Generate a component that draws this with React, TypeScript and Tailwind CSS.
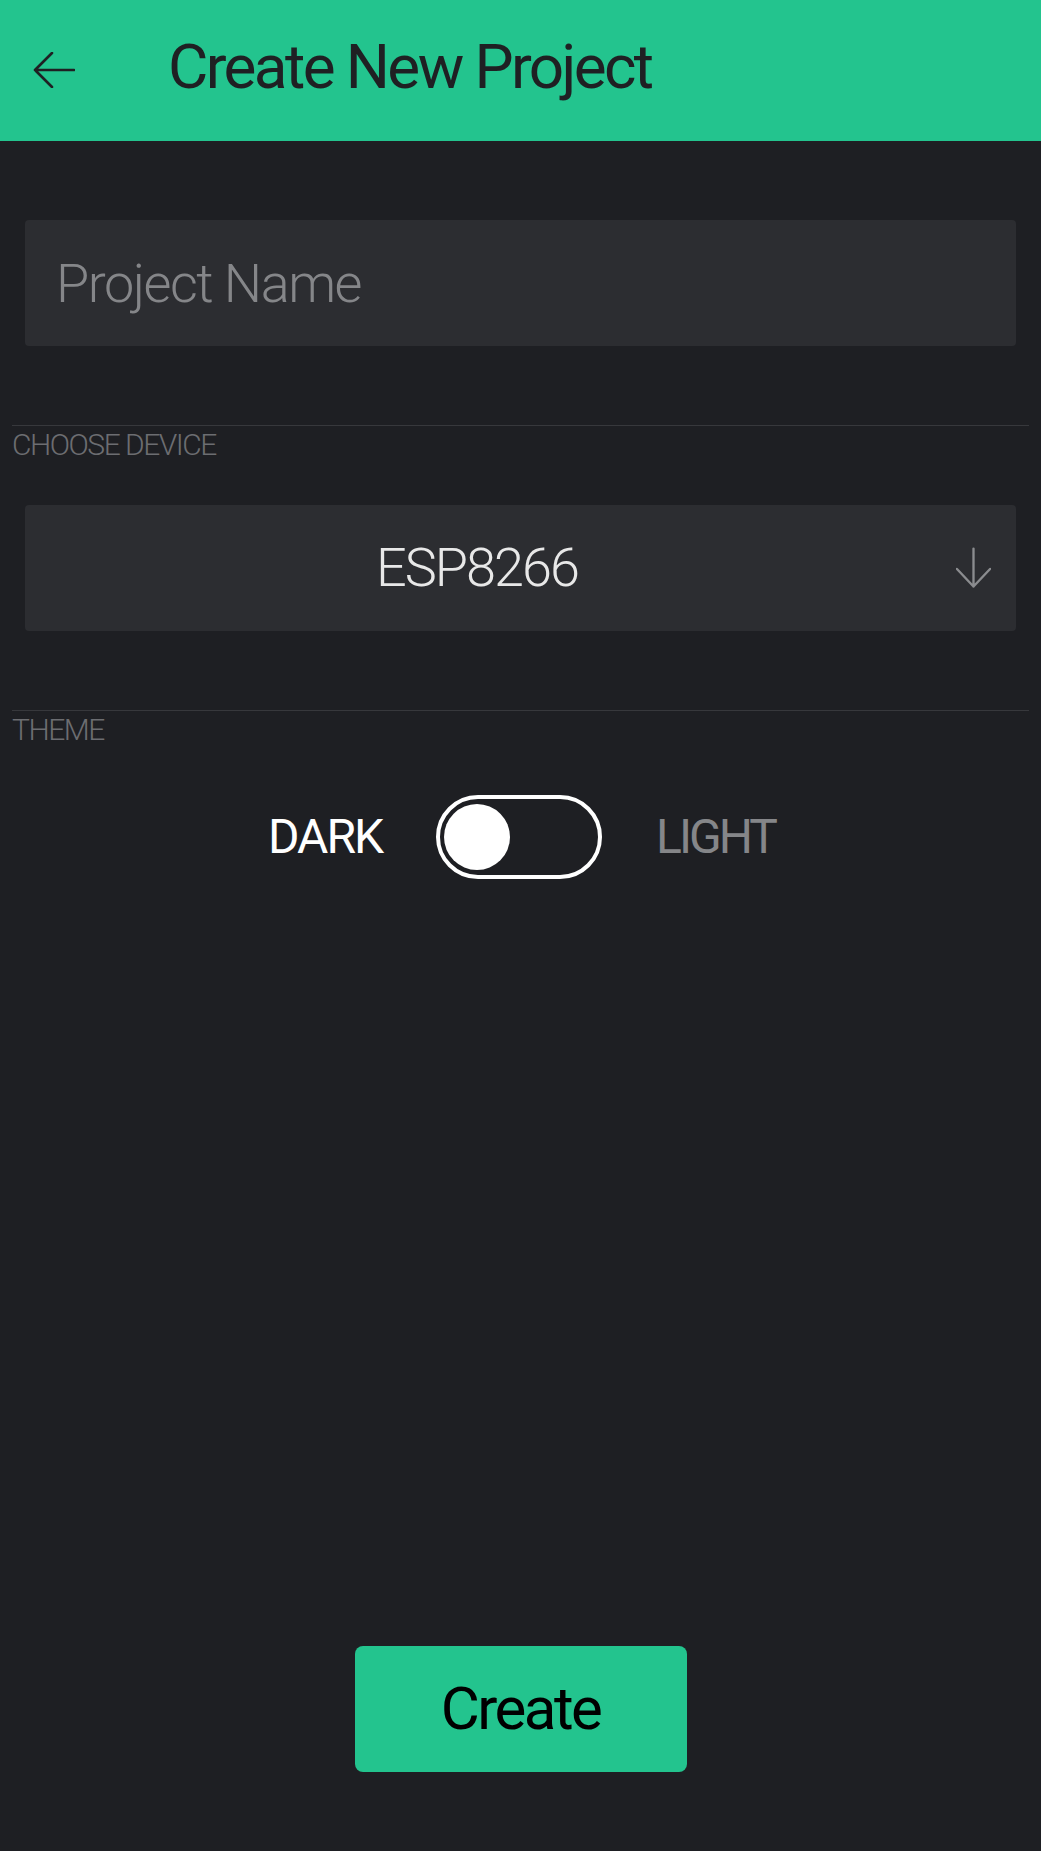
import React, { useState } from "react";

const font = { fontFamily: "Roboto, 'Noto Sans', sans-serif" };

function BackArrow() {
  return (
    <svg width="42" height="36" viewBox="0 0 42 36" fill="none" className="shrink-0">
      <path d="M2 18 H41 M19 1 L2 18 L19 35" stroke="#1f2023" strokeWidth="2.6" strokeLinecap="round" strokeLinejoin="round" />
    </svg>
  );
}

function DownArrow() {
  return (
    <svg width="36" height="42" viewBox="0 0 36 42" fill="none">
      <path d="M18 1 V40 M1 22 L18 40 L35 22" stroke="#8b8c8f" strokeWidth="2.4" strokeLinecap="round" strokeLinejoin="round" />
    </svg>
  );
}

function Section({ title }: { title: string }) {
  return (
    <div className="mx-[12px] border-t border-[#37383c] pt-[4px]">
      <div className="text-[30px] leading-[30px] tracking-[-1.5px] text-[#6c6d71]">{title}</div>
    </div>
  );
}

export default function App() {
  const [dark, setDark] = useState(true);
  const [name, setName] = useState("");

  return (
    <div className="flex min-h-[1851px] w-full flex-col bg-[#1e1f23] font-light" style={font}>
      <header className="flex h-[141px] items-center bg-[#23c48e] pb-[7px] pl-[33px]">
        <button className="mt-[5px]">
          <BackArrow />
        </button>
        <h1 className="ml-[93px] text-[62px] font-normal leading-[62px] tracking-[-2.6px] text-[#1f2023]">Create New Project</h1>
      </header>

      <div className="mx-[25px] mt-[79px] mb-[79px] flex h-[126px] items-center rounded-[4px] bg-[#2c2d31] px-[31px]">
        <input
          value={name}
          onChange={(e) => setName(e.target.value)}
          placeholder="Project Name"
          className="w-full bg-transparent text-[54px] leading-[54px] tracking-[-1.5px] text-[#e6e6e6] outline-none placeholder:text-[#858689]"
        />
      </div>

      <Section title="CHOOSE DEVICE" />

      <div className="mx-[25px] mt-[45px] mb-[79px] flex h-[126px] items-center rounded-[4px] bg-[#2c2d31] pr-[23px]">
        <div className="w-[904px] text-center text-[54px] leading-[54px] tracking-[-2px] text-[#e8e8e8]">ESP8266</div>
        <div className="ml-[27px] flex w-[35px] justify-center">
          <DownArrow />
        </div>
      </div>

      <Section title="THEME" />

      <div className="mt-[50px] flex items-center justify-center gap-[54px] pl-[2px]">
        <span className={`text-[48px] font-normal leading-[48px] tracking-[-2px] ${dark ? "text-white" : "text-[#858689]"}`}>DARK</span>
        <button
          onClick={() => setDark(!dark)}
          className={`flex h-[84px] w-[166px] items-center rounded-full border-[4px] border-white px-[4px] ${dark ? "justify-start" : "justify-end"}`}
        >
          <span className="h-[66px] w-[66px] rounded-full bg-white" />
        </button>
        <span className={`text-[48px] font-normal leading-[48px] tracking-[-3px] ${dark ? "text-[#858689]" : "text-white"}`}>LIGHT</span>
      </div>

      <div className="flex-1" />

      <div className="mb-[79px] flex justify-center">
        <button className="flex h-[126px] w-[332px] items-center justify-center rounded-[8px] bg-[#23c48e] text-[60px] font-normal leading-[60px] tracking-[-2.5px] text-black">
          Create
        </button>
      </div>
    </div>
  );
}
